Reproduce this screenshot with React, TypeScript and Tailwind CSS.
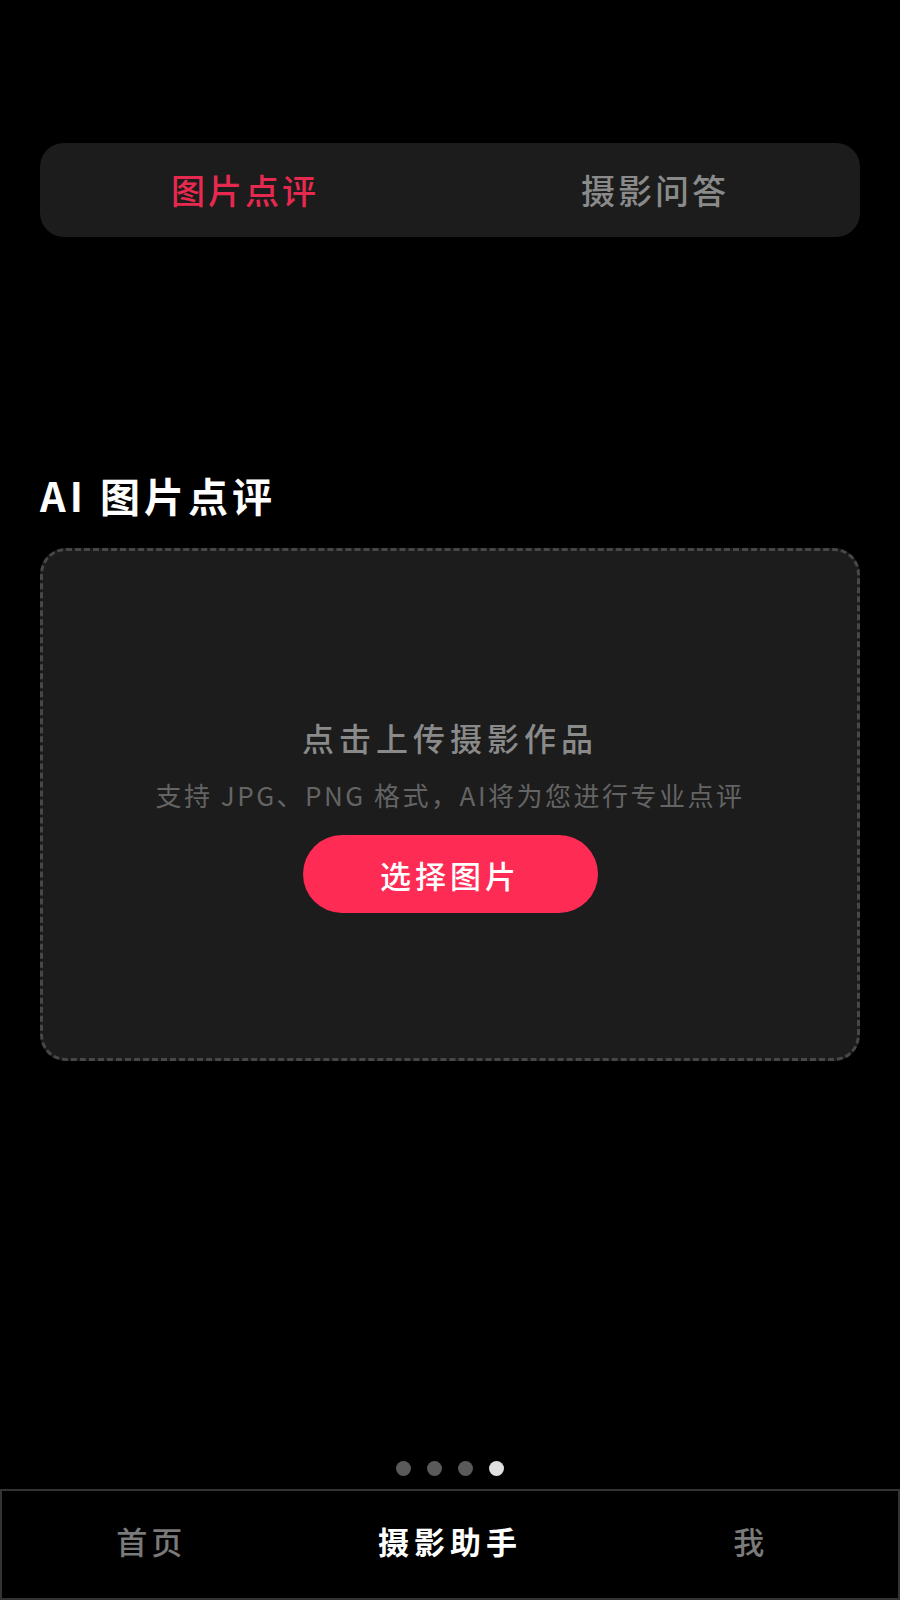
import React from "react";

export default function App() {
  const font = {
    fontFamily: '"Noto Sans CJK SC", "Noto Sans", sans-serif',
  };
  return (
    <div
      className="w-[900px] h-[1600px] bg-black flex flex-col overflow-hidden"
      style={font}
    >
      <div className="flex flex-col px-[40px] pt-[143px]">
        <div className="h-[94px] rounded-[24px] bg-[#1c1c1c] grid grid-cols-2 items-center">
          <div className="text-center text-[34px] leading-none font-medium tracking-[3px] text-[#e8294f]">
            图片点评
          </div>
          <div className="text-center text-[34px] leading-none font-medium tracking-[3px] text-[#8a8a8a]">
            摄影问答
          </div>
        </div>

        <h1 className="mt-[238px] text-[40px] leading-none font-bold tracking-[4px] text-white">
          AI 图片点评
        </h1>

        <div className="mt-[33px] h-[513px] rounded-[26px] border-[3px] border-dashed border-[#474747] bg-[#1c1c1c] flex flex-col items-center pt-[170px]">
          <div className="text-[32px] leading-none font-medium tracking-[5px] text-[#8a8a8a]">
            点击上传摄影作品
          </div>
          <div className="mt-[29px] text-[26px] leading-none tracking-[2.5px] text-[#646464]">
            支持 JPG、PNG 格式，AI将为您进行专业点评
          </div>
          <button className="mt-[27px] w-[295px] h-[78px] rounded-full bg-[#fe2c55] text-white text-[31px] leading-none font-medium tracking-[4px] flex items-center justify-center">
            选择图片
          </button>
        </div>
      </div>

      <div className="flex-1" />

      <div className="flex items-center justify-center gap-[16px] mb-[13px]">
        <span className="w-[15px] h-[15px] rounded-full bg-[#5a5a5a]" />
        <span className="w-[15px] h-[15px] rounded-full bg-[#5a5a5a]" />
        <span className="w-[15px] h-[15px] rounded-full bg-[#5a5a5a]" />
        <span className="w-[15px] h-[15px] rounded-full bg-[#e0e0e0]" />
      </div>

      <nav className="h-[111px] border-2 border-[#333333] bg-black grid grid-cols-3 items-center pb-[8px]">
        <div className="text-center text-[31px] leading-none font-medium tracking-[4px] text-[#7a7a7a]">
          首页
        </div>
        <div className="text-center text-[31px] leading-none tracking-[5px] font-bold text-white">
          摄影助手
        </div>
        <div className="text-center text-[31px] leading-none font-medium text-[#7a7a7a]">
          我
        </div>
      </nav>
    </div>
  );
}
